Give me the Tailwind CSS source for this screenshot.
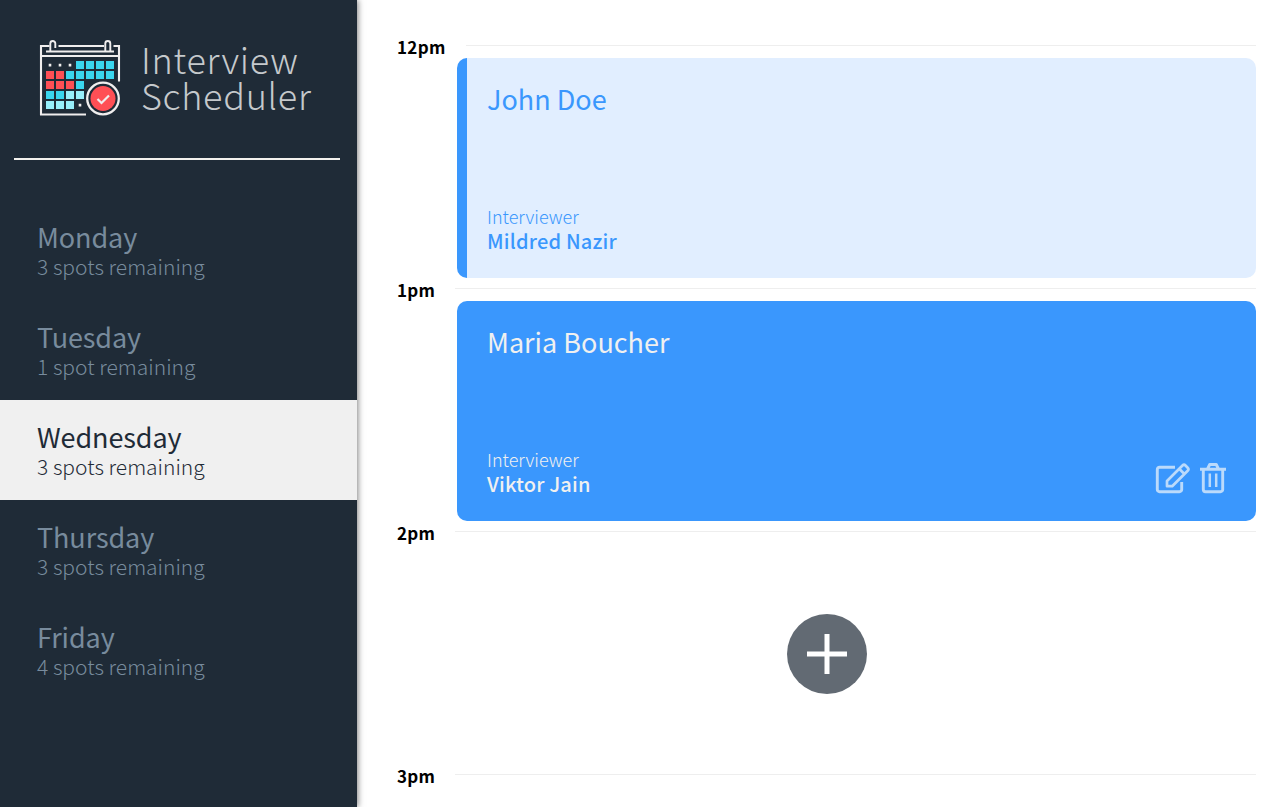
<!DOCTYPE html>
<html lang="en">
<head>
<meta charset="utf-8">
<title>Interview Scheduler</title>
<script src="https://cdn.jsdelivr.net/npm/@tailwindcss/browser@4"></script>
</head>
<body class="h-[807px] overflow-hidden bg-white font-['Noto_Sans_CJK_JP','Noto_Sans',sans-serif] antialiased">
<div class="flex h-full">
  <aside class="z-10 flex w-[357px] shrink-0 flex-col bg-[#1f2b37] shadow-[1px_0_6px_rgba(0,0,0,0.5)]">
    <div class="flex h-[158px] pl-[39px] pt-[39px]">
      <svg class="h-[78px] w-[82px] shrink-0" viewBox="39 39 82 78" fill="none" stroke="#f0eeee" stroke-width="2.1">
        <path d="M49.500 46H41V114.500H86M58.500 46H104M113.500 46H119V81.500M41 56H119M46 51.500H114"/>
        <path stroke-width="1.9" d="M50.300 51V43.500a2.500 2.500 0 0 1 5 0V48M105.300 51V43.500a2.500 2.500 0 0 1 5 0V51"/>
        <g stroke="none">
          <path fill="#f0eeee" d="M48.700 63.800h2.600v2.600h-2.600zM58.700 63.800h2.600v2.600h-2.600zM68.700 63.800h2.600v2.600h-2.600zM78.700 103.800h2.600v2.600h-2.600z"/>
          <path fill="#3ad6ef" d="M76 61h8v8h-8zM86 61h8v8h-8zM96 61h8v8h-8zM106 61h8v8h-8zM66 71h8v8h-8zM76 71h8v8h-8zM86 71h8v8h-8zM96 71h8v8h-8zM106 71h8v8h-8zM76 81h8v8h-8zM46 91h8v8h-8zM56 91h8v8h-8z"/>
          <path fill="#ff4f55" d="M46 71h8v8h-8zM56 71h8v8h-8zM46 81h8v8h-8zM56 81h8v8h-8zM66 81h8v8h-8z"/>
          <path fill="#97effb" d="M66 91h8v8h-8zM76 91h8v8h-8zM46 101h8v8h-8zM56 101h8v8h-8zM66 101h8v8h-8z"/>
        </g>
        <circle cx="103" cy="98.500" r="15.800" fill="#1f2b37" stroke-width="2.300"/>
        <circle cx="103" cy="98.500" r="12.500" fill="#ff4f55" stroke="none"/>
        <path d="M97.500 99l4 4 7.500-7.500" stroke-width="2.200"/>
      </svg>
      <div class="ml-[20px] mt-[1px] text-[36px] font-light leading-[36px] tracking-[0.7px] text-[#c5c9cc]">Interview<br>Scheduler</div>
    </div>
    <div class="ml-[14px] h-[2px] w-[326px] bg-[#f3f1ee]"></div>
    <nav class="mt-[40px] text-[#788b9d]">
      <div class="h-[100px] pl-[37px] pt-[20px]"><h2 class="text-[27px] leading-[34px] tracking-[-0.1px]">Monday</h2><p class="text-[21px] font-light leading-[24px]">3 spots remaining</p></div>
      <div class="h-[100px] pl-[37px] pt-[20px]"><h2 class="text-[27px] leading-[34px] tracking-[-0.1px]">Tuesday</h2><p class="text-[21px] font-light leading-[24px]">1 spot remaining</p></div>
      <div class="h-[100px] bg-[#f0f0f0] pl-[37px] pt-[20px] text-[#1f2b37]"><h2 class="text-[27px] leading-[34px] tracking-[-0.1px]">Wednesday</h2><p class="text-[21px] font-light leading-[24px]">3 spots remaining</p></div>
      <div class="h-[100px] pl-[37px] pt-[20px]"><h2 class="text-[27px] leading-[34px] tracking-[-0.1px]">Thursday</h2><p class="text-[21px] font-light leading-[24px]">3 spots remaining</p></div>
      <div class="h-[100px] pl-[37px] pt-[20px]"><h2 class="text-[27px] leading-[34px] tracking-[-0.1px]">Friday</h2><p class="text-[21px] font-light leading-[24px]">4 spots remaining</p></div>
    </nav>
  </aside>
  <main class="flex w-[899px] flex-col pl-[40px] pt-[35px] text-black">
    <section class="h-[243px]">
      <div class="flex h-[23px] justify-between"><h4 class="text-[17px] font-bold leading-[24px] tracking-[0.3px]">12pm</h4><hr class="mt-[10px] w-[790px] border-[#eeeeee]"></div>
      <article class="ml-[60px] flex h-[220px] flex-col justify-between rounded-[10px] border-l-[10px] border-[#3a97fd] bg-[#e1eeff] pb-[25px] pl-[20px] pt-[23px] text-[#3a97fd]">
        <h2 class="text-[27px] leading-[36px]">John Doe</h2>
        <div><h4 class="pb-[2px] text-[18px] font-light leading-[22px]">Interviewer</h4><h3 class="text-[20px] font-medium leading-[24px] tracking-[0.2px]">Mildred Nazir</h3></div>
      </article>
    </section>
    <section class="h-[243px]">
      <div class="flex h-[23px] justify-between"><h4 class="text-[17px] font-bold leading-[24px] tracking-[0.3px]">1pm</h4><hr class="mt-[10px] w-[801px] border-[#eeeeee]"></div>
      <article class="ml-[60px] flex h-[220px] flex-col justify-between rounded-[10px] bg-[#3a97fd] pb-[25px] pl-[30px] pt-[23px] text-[#f0f0f0]">
        <h2 class="text-[27px] leading-[36px]">Maria Boucher</h2>
        <div class="flex justify-between">
          <div><h4 class="pb-[2px] text-[18px] font-light leading-[22px]">Interviewer</h4><h3 class="text-[20px] font-medium leading-[24px] tracking-[0.15px]">Viktor Jain</h3></div>
          <svg class="mr-[29px] mt-[13px] h-[33px] w-[72px]" viewBox="1155 461 72 33" fill="none" stroke="#bbdafb" stroke-width="2.9" stroke-linejoin="round">
            <path d="M1175 467.200H1159.500a2.200 2.200 0 0 0-2.200 2.200V489.500a2.200 2.200 0 0 0 2.200 2.200H1179.500a2.200 2.200 0 0 0 2.200-2.200V482"/>
            <path stroke-width="2.700" d="M1167 486.200v-5.200L1182.500 465.500q1.500-1.500 3 0l2.200 2.200q1.500 1.500 0 3L1172.200 486.200ZM1179.200 468.800l5.200 5.200"/>
            <path d="M1200 469.200H1226M1203.300 469.200V489.500a2.200 2.200 0 0 0 2.200 2.200H1220.500a2.200 2.200 0 0 0 2.200-2.200V469.200M1207.500 469l2.200-4.500h6.600l2.200 4.500"/>
            <path stroke-width="2.500" d="M1209.800 473.500V487M1216.200 473.500V487"/>
          </svg>
        </div>
      </article>
    </section>
    <section class="h-[243px]">
      <div class="flex h-[23px] justify-between"><h4 class="text-[17px] font-bold leading-[24px] tracking-[0.3px]">2pm</h4><hr class="mt-[10px] w-[801px] border-[#eeeeee]"></div>
      <div class="flex h-[220px] items-center justify-center">
        <svg class="h-[80px] w-[80px]" viewBox="0 0 80 80"><circle cx="40" cy="40" r="40" fill="#626a73"/><path d="M40 20V60M20 40H60" stroke="#fff" stroke-width="5"/></svg>
      </div>
    </section>
    <section class="h-[35px]">
      <div class="flex h-[23px] justify-between"><h4 class="text-[17px] font-bold leading-[24px] tracking-[0.3px]">3pm</h4><hr class="mt-[10px] w-[801px] border-[#eeeeee]"></div>
    </section>
  </main>
</div>
</body>
</html>
